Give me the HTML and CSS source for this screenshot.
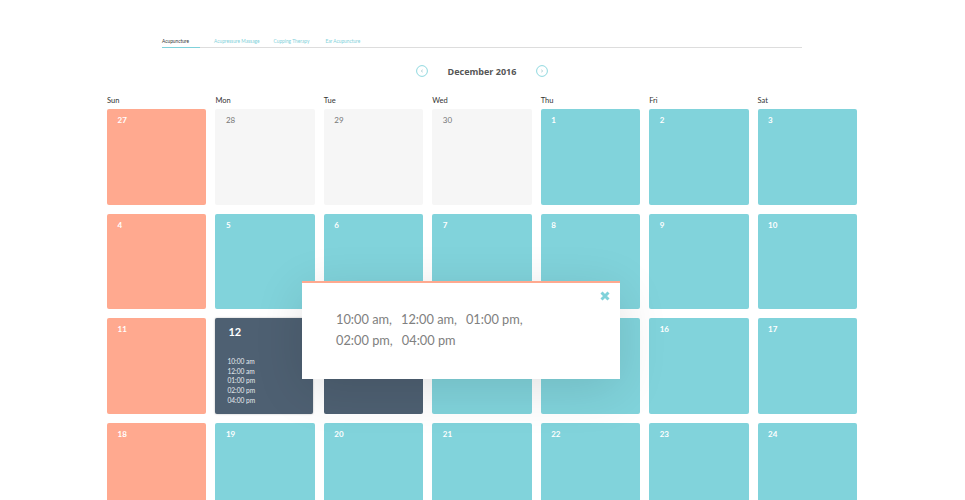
FILE: index.html
```html
<!DOCTYPE html>
<html lang="en">
<head>
    <meta charset="UTF-8">
    <title>Appointments</title>
    <link rel="stylesheet" href="styles.css">
</head>
<body>
    <div class="tabs">
        <a class="tab active">Acupuncture</a>
        <a class="tab">Acupressure Massage</a>
        <a class="tab">Cupping Therapy</a>
        <a class="tab">Ear Acupuncture</a>
    </div>
    <div class="month-nav">
        <svg class="nav-btn" viewBox="0 0 12 12" width="12" height="12"><circle cx="6" cy="6" r="5.4" /><path class="chevron" d="M6.8 4.8 L5.2 6 L6.8 7.2" /></svg>
        <span class="month-title">December 2016</span>
        <svg class="nav-btn" viewBox="0 0 12 12" width="12" height="12"><circle cx="6" cy="6" r="5.4" /><path class="chevron" d="M5.2 4.8 L6.8 6 L5.2 7.2" /></svg>
    </div>
    <div class="weekdays">
        <span>Sun</span><span>Mon</span><span>Tue</span><span>Wed</span><span>Thu</span><span>Fri</span><span>Sat</span>
    </div>
    <div class="calendar">
        <div class="day closed">27</div>
        <div class="day past">28</div>
        <div class="day past">29</div>
        <div class="day past">30</div>
        <div class="day">1</div>
        <div class="day">2</div>
        <div class="day">3</div>

        <div class="day closed">4</div>
        <div class="day">5</div>
        <div class="day">6</div>
        <div class="day">7</div>
        <div class="day">8</div>
        <div class="day">9</div>
        <div class="day">10</div>

        <div class="day closed">11</div>
        <div class="day selected">
            <div class="selected-num">12</div>
            <ul class="times">
                <li>10:00 am</li>
                <li>12:00 am</li>
                <li>01:00 pm</li>
                <li>02:00 pm</li>
                <li>04:00 pm</li>
            </ul>
        </div>
        <div class="day hovered"></div>
        <div class="day"></div>
        <div class="day"></div>
        <div class="day">16</div>
        <div class="day">17</div>

        <div class="day closed">18</div>
        <div class="day">19</div>
        <div class="day">20</div>
        <div class="day">21</div>
        <div class="day">22</div>
        <div class="day">23</div>
        <div class="day">24</div>
    </div>
    <div class="popup">
        <svg class="popup-close" viewBox="0 0 10 10" width="10" height="10"><path d="M1.5 1.5 L8.5 8.5 M8.5 1.5 L1.5 8.5" /></svg>
        <p class="popup-times">
            <span>10:00 am,</span><span>12:00 am,</span><span>01:00 pm,</span><span>02:00 pm,</span><span>04:00 pm</span>
        </p>
    </div>
</body>
</html>
```

FILE: styles.css
```css
html, body {
  height: 500px;
  overflow: hidden;
}
body {
  margin: 0;
  background: #fff;
  font-family: Lato, "Open Sans", sans-serif;
  color: #444;
  position: relative;
}
.tabs {
  display: flex;
  width: 640px;
  height: 10px;
  margin: 37px 0 0 162px;
  border-bottom: 1px solid #ddd;
  font-size: 4.8px;
  line-height: 8px;
  color: #7fd1da;
}
.tab {
  margin-right: 14px;
}
.tab:nth-child(3) {
  margin-right: 16px;
}
.tab.active {
  width: 38px;
  margin-right: 14px;
  height: 10px;
  color: #333;
  border-bottom: 1px solid #7fd1da;
}
.month-nav {
  display: flex;
  justify-content: center;
  align-items: center;
  gap: 20px;
  width: 270px;
  height: 14px;
  margin: 16px 0 0 347px;
}
.month-title {
  font-family: "Open Sans", sans-serif;
  font-size: 9px;
  font-weight: 700;
  color: #555;
}
.nav-btn {
  fill: none;
  stroke: #8fd8df;
  stroke-width: 1;
}
.chevron {
  stroke: #9cc4ca;
  stroke-width: 0.7;
}
.weekdays {
  display: grid;
  grid-template-columns: repeat(7, 1fr);
  gap: 9px;
  width: 750px;
  margin: 15px 0 0 107px;
  height: 16px;
  font-size: 7.5px;
  line-height: 15px;
  color: #333;
}
.calendar {
  display: grid;
  grid-template-columns: repeat(7, 1fr);
  grid-auto-rows: 95.6px;
  gap: 9px;
  width: 750px;
  margin-left: 107px;
}
.day {
  padding: 6px 10.5px;
  border-radius: 2px;
  background: #81d3db;
  color: #fff;
  font-size: 8px;
  font-weight: 700;
  line-height: 11px;
}
.day.closed {
  background: #ffa98f;
}
.day.past {
  background: #f6f6f6;
  color: #777;
  font-weight: 400;
}
.day.selected, .day.hovered {
  background: #4e6072;
}
.day.selected {
  margin-right: 2px;
  padding: 8px 13px;
  box-shadow: 0 0 2px rgba(0, 0, 0, 0.3);
}
.selected-num {
  font-size: 11px;
  line-height: 12px;
}
.times {
  list-style: none;
  margin: 19px 0 0 -1px;
  padding: 0;
  font-size: 6.6px;
  font-weight: 400;
  line-height: 9.6px;
  color: #e6eaee;
}
.popup {
  position: absolute;
  left: 302px;
  top: 281px;
  width: 318px;
  height: 98px;
  box-sizing: border-box;
  padding: 26px 34px;
  background: #fff;
  border-top: 2px solid #ffa98f;
  box-shadow: 0 10px 50px rgba(0, 0, 0, 0.12);
}
.popup-close {
  position: absolute;
  top: 8px;
  right: 10px;
  fill: none;
  stroke: #80d2da;
  stroke-width: 3;
}
.popup-times {
  display: flex;
  flex-wrap: wrap;
  gap: 0 9px;
  margin: 0;
  font-size: 12.8px;
  line-height: 21px;
  color: #808080;
}
```
